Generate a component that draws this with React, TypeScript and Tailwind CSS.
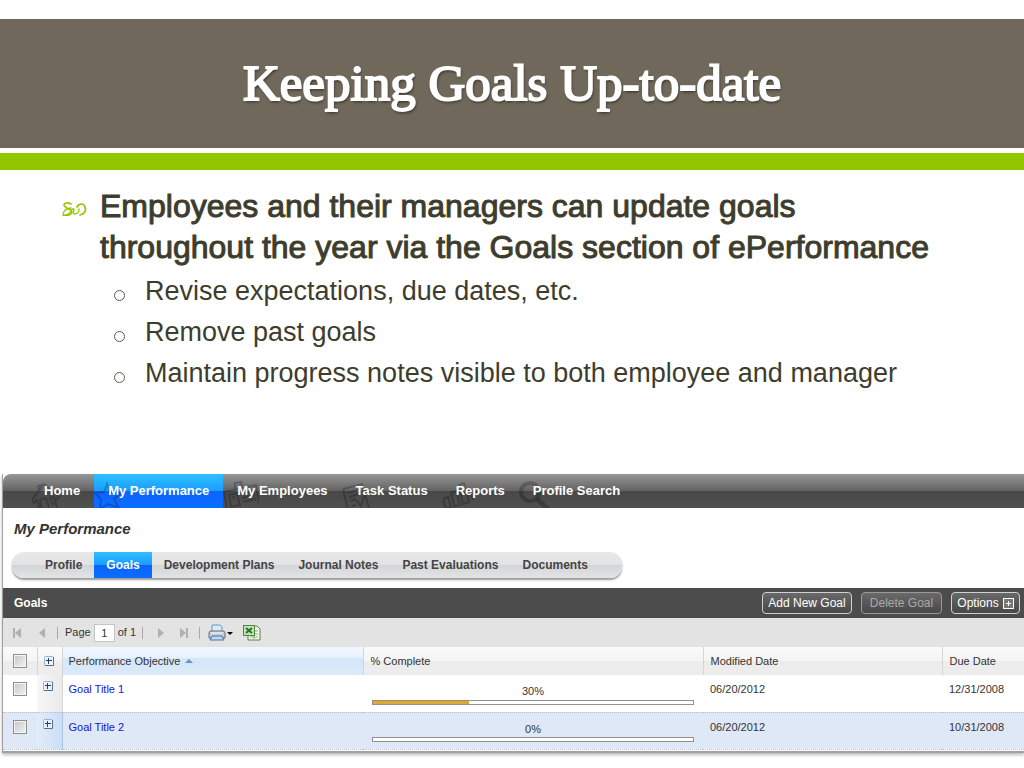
import React from 'react';
import clsx from 'clsx';

const notes = [
  'Revise expectations, due dates, etc.',
  'Remove past goals',
  'Maintain progress notes visible to both employee and manager',
];

const mainTabs = [
  { label: 'Home', icon: 'home', active: false },
  { label: 'My Performance', icon: 'star', active: true },
  { label: 'My Employees', icon: 'card', active: false },
  { label: 'Task Status', icon: 'task', active: false },
  { label: 'Reports', icon: 'chart', active: false },
  { label: 'Profile Search', icon: 'search', active: false },
];

const subTabs = [
  'Profile',
  'Goals',
  'Development Plans',
  'Journal Notes',
  'Past Evaluations',
  'Documents',
];

const goals = [
  { title: 'Goal Title 1', complete: 30, modified: '06/20/2012', due: '12/31/2008' },
  { title: 'Goal Title 2', complete: 0, modified: '06/20/2012', due: '10/31/2008' },
];

function Flourish() {
  return (
    <svg width="26" height="16" viewBox="0 0 26 16" fill="none" stroke="#94c600" strokeLinecap="round">
      <path d="M9 2C6 0 2 1 2 3C2 6 9 7 10 10C10 12 7 14 4 13" strokeWidth="1.6" />
      <path d="M9 6C5 6 1 9 1 13C4 14 8 12 9 9C10 7 12 6 12 8C11 10 11 12 13 12C15 12 17 10 17 7" strokeWidth="1.4" />
      <path d="M15 5C17 1 22 1 23 5C25 9 21 13 18 13" strokeWidth="1.7" />
    </svg>
  );
}

// faded pictures behind the main tabs
function TabIcon({ name }: { name: string }) {
  return (
    <svg
      className="absolute bottom-0 left-0"
      width="36"
      height="28"
      viewBox="0 0 36 28"
      fill="none"
      stroke="#000"
      strokeOpacity="0.22"
      strokeWidth="2"
    >
      {name === 'home' && (
        <path d="M2 20L14 4L29 17L26 20L24 18L28 30M2 20L4 23L7 20L10 30M12 30L10 20L16 18L19 28M20 18L24 17L26 23L22 24ZM9 10L8 6L12 5" />
      )}
      {name === 'star' && (
        <path d="M13 4L16 13L27 13L20 19L25 28L14 24L6 29L7 19L1 13L10 12Z" />
      )}
      {name === 'card' && (
        <path d="M1 12L33 5L37 28M1 12L4 30M6 15L14 13L17 25L8 27ZM9 18L12 17M18 14L31 11M19 18L32 15M20 22L33 19M12 9L12 3L18 2L19 8" />
      )}
      {name === 'task' && (
        <path d="M1 9L20 4L27 28M1 9L6 30M5 13L18 9M7 17L17 14M8 21L14 19M10 26L14 25M14 20L19 26L24 10" />
      )}
      {name === 'chart' && (
        <path d="M1 19L4 30M1 19L6 17L9 27L5 28M9 12L14 11L18 25L12 26ZM17 5L22 3L27 22L21 24ZM24 11L28 10L31 20" />
      )}
      {name === 'search' && (
        <>
          <circle cx="11" cy="12" r="9" strokeWidth="4" />
          <path d="M18 19L30 30" strokeWidth="5" />
        </>
      )}
    </svg>
  );
}

function Expander() {
  return (
    <svg className="block" width="10" height="10" viewBox="0 0 10 10">
      <rect x="0.500" y="0.500" width="9" height="9" rx="1" fill="#e8f1f9" stroke="#9db5cb" />
      <path d="M9.500 1V9.500H1" fill="none" stroke="#527394" />
      <path d="M2 4.500H8M4.500 2V8" stroke="#28405e" strokeWidth="1" />
    </svg>
  );
}

function PagerIcon({ back, end }: { back?: boolean; end?: boolean }) {
  return (
    <svg
      className={clsx('block', back && 'rotate-180')}
      width="10"
      height="12"
      viewBox="0 0 10 12"
      fill="#b0b0b0"
    >
      <path d="M1 1L7 6L1 11Z" />
      {end && <rect x="7" y="1" width="2" height="10" />}
    </svg>
  );
}

function PrinterIcon() {
  return (
    <svg width="26" height="18" viewBox="0 0 26 18">
      <path d="M4 8V1H12L14 3V8" fill="#d9ebfb" stroke="#6f96c0" />
      <path d="M1 9Q1 7 3 7H15Q17 7 17 9V14H1Z" fill="#c9cdd4" stroke="#666d78" />
      <path d="M3 9H15" stroke="#f4f6f8" />
      <path d="M4 12H14L16 16H2Z" fill="#b9d9f5" stroke="#4c74a0" />
      <path d="M19 8H25L22 11Z" fill="#000" />
    </svg>
  );
}

function ExcelIcon() {
  return (
    <svg width="18" height="17" viewBox="0 0 18 17">
      <path d="M5 2H14L17 5V16H5Z" fill="#f4f9ef" stroke="#5b7f4b" />
      <path d="M12 7H15M12 10H15M7 13H15M11 11V15" stroke="#8cb577" />
      <rect x="0.500" y="1.500" width="11" height="10" fill="#c7e2ba" stroke="#4d8a3b" />
      <path d="M3 4L9 9M9 4L3 9" stroke="#26772a" strokeWidth="2" />
    </svg>
  );
}

function Check({ label }: { label: string }) {
  return (
    <input
      type="checkbox"
      aria-label={label}
      className="block size-[14px] appearance-none border border-[#8e8f8f] bg-gradient-to-br from-[#c4c6c8] to-[#f4f4f4] shadow-[inset_0_0_0_1px_#f4f4f4]"
    />
  );
}

function Separator() {
  return <span className="h-3 w-px bg-[#a8a8a8]" />;
}

const actionButton =
  'flex h-[22px] items-center justify-center rounded-[4px] border bg-gradient-to-b from-[#696969] to-[#484848] text-xs';

export default function App() {
  return (
    <div className="min-h-screen overflow-x-hidden bg-white font-['Liberation_Sans',Arial,sans-serif]">
      <header className="pt-[19px]">
        <div className="flex h-[129px] items-center justify-center bg-[#70685a]">
          <h1 className="text-center font-['Liberation_Serif',serif] text-[51px] leading-none text-white [-webkit-text-stroke:2px_white] [text-shadow:1px_2px_3px_rgba(0,0,0,0.6)]">
            Keeping Goals Up-to-date
          </h1>
        </div>
        <div className="mt-[5px] h-[17px] bg-[#94c600]" />
      </header>

      <section className="min-h-[304px] px-[62px] pt-4 text-[#3e3d2d]">
        <div className="flex">
          <div className="w-[38px] shrink-0 pt-4">
            <Flourish />
          </div>
          <h2 className="text-[32px] leading-[41px] [-webkit-text-stroke:1px_#3e3d2d]">
            Employees and their managers can update goals
            <br />
            throughout the year via the Goals section of ePerformance
          </h2>
        </div>
        <ul className="pt-[3px] pl-[52px]">
          {notes.map((note) => (
            <li key={note} className="flex h-[41px] items-center text-[27px] whitespace-nowrap">
              <span className="mt-2 mr-5 size-[11px] shrink-0 rounded-full border border-[#5c5b4e]" />
              {note}
            </li>
          ))}
        </ul>
      </section>

      <main className="ml-[2px] border-b-2 border-l border-[#a0a0a0] pb-px text-[11px] text-[#333] shadow-[0_2px_3px_#bbb]">
        <nav className="flex h-[34px] rounded-tl-lg bg-[linear-gradient(#979797,#626262_50%,#484848_50%,#505050)] pl-[27px] text-[13px] font-bold text-white">
          {mainTabs.map((tab) => (
            <a
              key={tab.label}
              href="#"
              className={clsx(
                'relative flex items-center px-[14px] whitespace-nowrap',
                tab.active && 'bg-[linear-gradient(#2fc0ff,#1a9cff_50%,#0b63ff_50%,#0b6eff)]',
              )}
            >
              <TabIcon name={tab.icon} />
              <span className="relative">{tab.label}</span>
            </a>
          ))}
        </nav>

        <h2 className="pt-3 pl-[11px] text-[15px] leading-[18px] font-bold italic">My Performance</h2>

        <nav className="mt-[14px] ml-[9px] flex h-[26px] w-[610px] rounded-xl bg-[linear-gradient(#e9e9e9,#e2e2e2_50%,#d3d4d6_50%,#e3e4e6)] pl-[21px] text-xs font-bold text-[#444] shadow-[0_2px_2px_#999]">
          {subTabs.map((tab) => (
            <a
              key={tab}
              href="#"
              className={clsx(
                'flex items-center px-3 whitespace-nowrap',
                tab === 'Goals' &&
                  'bg-[linear-gradient(#2fc0ff,#1a9cff_50%,#0b63ff_50%,#0b6eff)] text-white',
              )}
            >
              {tab}
            </a>
          ))}
        </nav>

        <div className="mt-[10px] flex h-[30px] items-center bg-[#4c4c4c] pr-1 pl-[11px] text-white">
          <h3 className="flex-1 text-xs font-bold">Goals</h3>
          <div className="flex gap-[9px]">
            <button className={clsx(actionButton, 'w-[90px] border-[#d0d0d0]')}>Add New Goal</button>
            <button disabled className={clsx(actionButton, 'w-[81px] border-[#999] text-[#aaa]')}>
              Delete Goal
            </button>
            <button className={clsx(actionButton, 'w-[69px] gap-1 border-[#d0d0d0]')}>
              Options
              <svg width="11" height="11" viewBox="0 0 11 11" fill="none" stroke="#fff">
                <rect x="0.500" y="0.500" width="10" height="10" fill="#777" />
                <path d="M3 5.500H8M5.500 3V8" />
              </svg>
            </button>
          </div>
        </div>

        <div className="flex h-[29px] items-center bg-[#e3e3e3] pl-[9px]">
          <button aria-label="First page">
            <PagerIcon back end />
          </button>
          <button aria-label="Previous page" className="ml-[14px]">
            <PagerIcon back />
          </button>
          <span className="mr-[7px] ml-[11px] flex">
            <Separator />
          </span>
          <label htmlFor="page">Page</label>
          <input
            id="page"
            defaultValue="1"
            className="mx-[3px] h-[18px] w-[21px] border border-[#c4c4c4] bg-white text-center"
          />
          <span className="mr-[6px]">of 1</span>
          <Separator />
          <button aria-label="Next page" className="ml-[14px]">
            <PagerIcon />
          </button>
          <button aria-label="Last page" className="mr-[10px] ml-[12px]">
            <PagerIcon end />
          </button>
          <Separator />
          <button aria-label="Print" className="ml-2">
            <PrinterIcon />
          </button>
          <button aria-label="Export to Excel" className="ml-[9px]">
            <ExcelIcon />
          </button>
        </div>

        <table className="w-full table-fixed border-collapse text-left">
          <colgroup>
            <col className="w-[34px]" />
            <col className="w-[25px]" />
            <col className="w-[301px]" />
            <col />
            <col className="w-[239px]" />
            <col className="w-[82px]" />
          </colgroup>
          <thead>
            <tr className="h-7 bg-[linear-gradient(#fafafa,#f5f5f5_50%,#ececec_50%,#ededed)] [&>th]:border-r [&>th]:border-[#d5d5d5] [&>th]:font-normal [&>th:last-child]:border-r-0">
              <th className="pl-[10px]">
                <Check label="Select all goals" />
              </th>
              <th className="pl-[6px]">
                <Expander />
              </th>
              <th className="bg-[linear-gradient(#f1f7fe,#e6f1fd_40%,#d5e6f9_40%,#dbeafa)] pl-[6px]">
                <span className="flex items-center gap-[5px]">
                  Performance Objective
                  <svg width="8" height="4" viewBox="0 0 8 4" fill="#6593bf">
                    <path d="M0 4L4 0L8 4Z" />
                  </svg>
                </span>
              </th>
              <th className="pl-[7px]">% Complete</th>
              <th className="pl-[7px]">Modified Date</th>
              <th className="pl-[7px]">Due Date</th>
            </tr>
          </thead>
          <tbody>
            {goals.map((goal, i) => (
              <tr
                key={goal.title}
                className={clsx(
                  'h-[37px] align-top',
                  i === 1 && 'border-y border-dotted border-[#b5bfce] bg-[#dfe8f6]',
                )}
              >
                <td className="pt-[7px] pl-[10px]">
                  <Check label={`Select ${goal.title}`} />
                </td>
                <td
                  className={clsx(
                    'border-r pt-[6px] pl-[6px]',
                    i === 1
                      ? 'border-[#a9c5e8] bg-gradient-to-r from-[#e2edfb] to-[#cbddf5]'
                      : 'border-[#d5d5d5] bg-gradient-to-r from-[#f7f7f7] to-[#eaeaea]',
                  )}
                >
                  <Expander />
                </td>
                <td className="pt-[6px] pl-[6px]">
                  <a href="#" className="text-[#1414d8]">
                    {goal.title}
                  </a>
                </td>
                <td className="px-[9px] pt-[8px]">
                  <div className="text-center">{goal.complete}%</div>
                  <div className="h-[5px] border border-[#909090] bg-white">
                    <div className="h-full bg-[#dfa92c]" style={{ width: `${goal.complete}%` }} />
                  </div>
                </td>
                <td className="pt-[6px] pl-[7px]">{goal.modified}</td>
                <td className="pt-[6px] pl-[7px]">{goal.due}</td>
              </tr>
            ))}
          </tbody>
        </table>
      </main>
    </div>
  );
}
